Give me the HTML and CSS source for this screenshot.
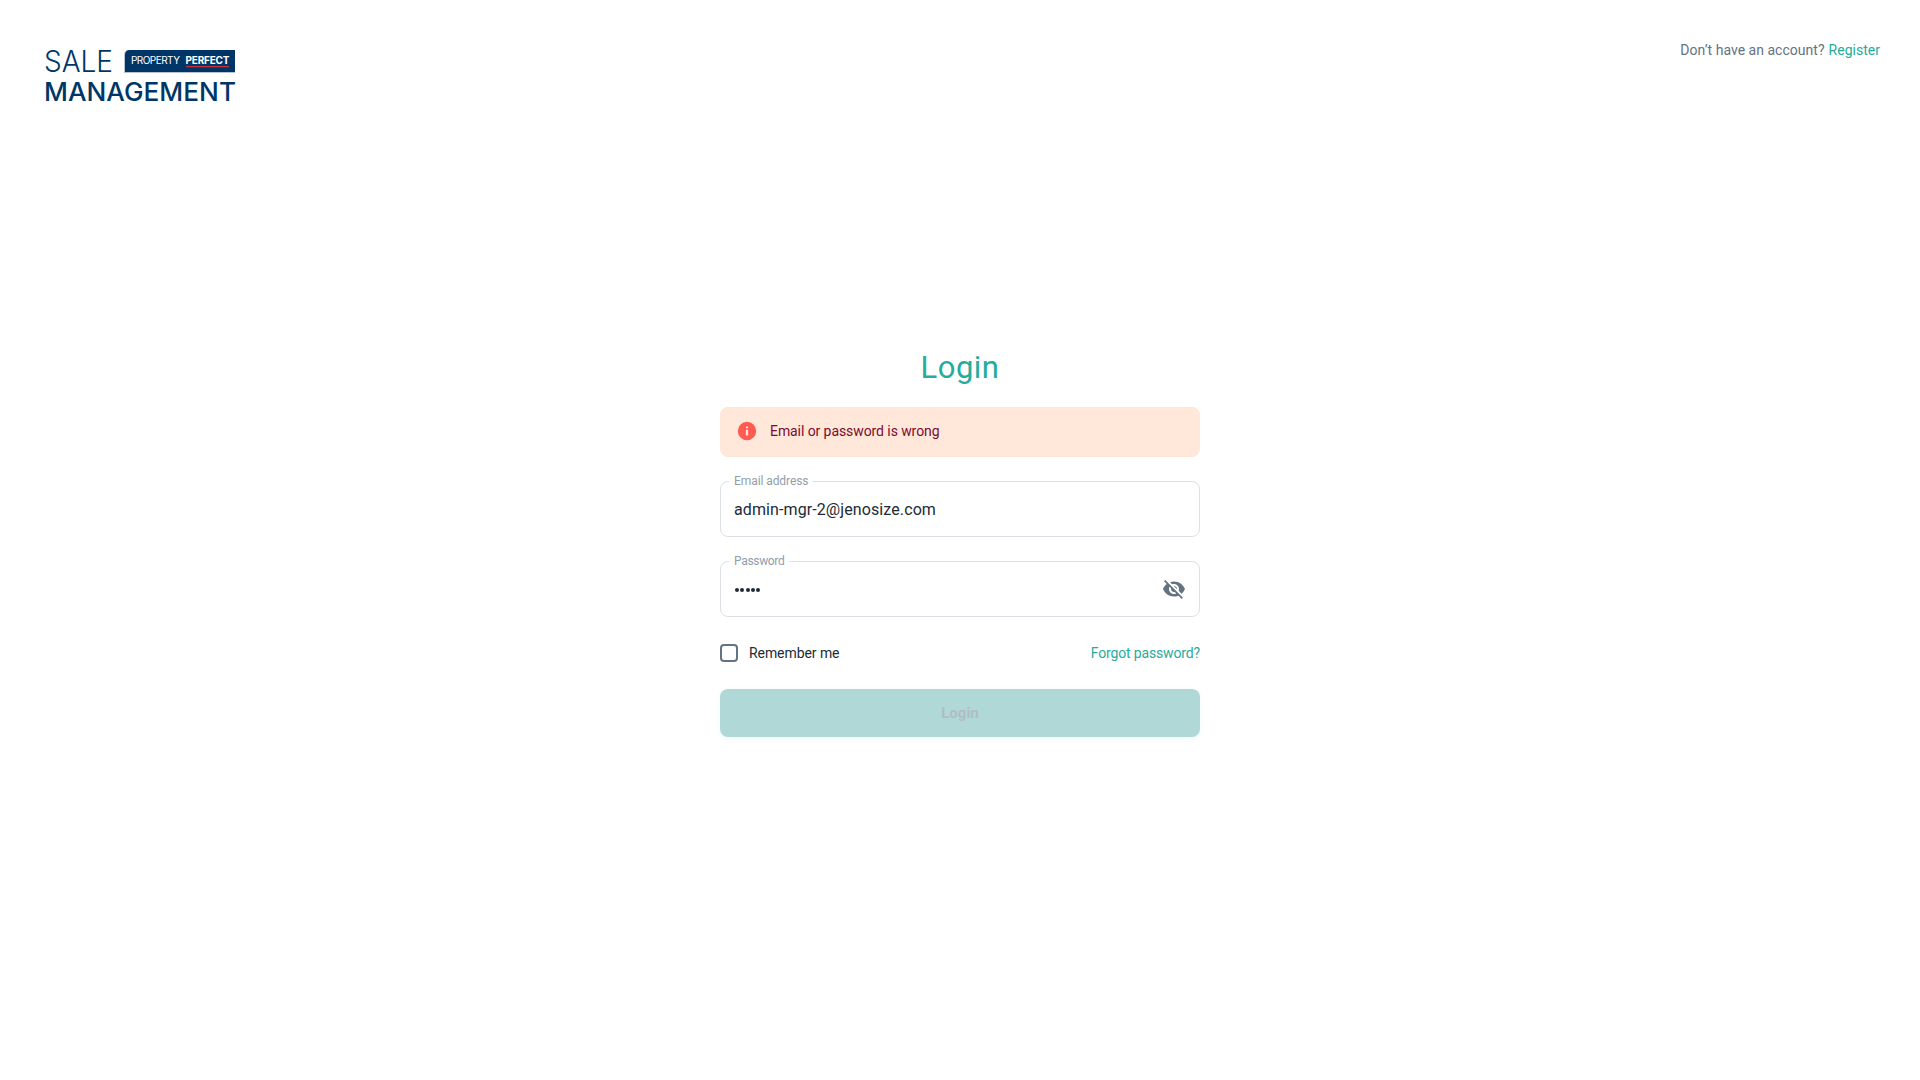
FILE: index.html
```html
<!DOCTYPE html>
<html lang="en">
<head>
<meta charset="utf-8">
<title>Login</title>
<link rel="stylesheet" href="styles.css">
</head>
<body>
<header class="header">
  <svg class="logo" width="192" height="56" viewBox="0 0 192 56" role="img" aria-label="Sale Management">
    <text class="logo-sale" x="-1" y="27.300" textLength="69" lengthAdjust="spacingAndGlyphs">SALE</text>
    <path d="M79 28V10q0-5 5-5h106v23z" fill="#b9c3cd"/>
    <path d="M80 27V10q0-5 5-5h105v22z" fill="#003667"/>
    <text class="logo-tag" x="86" y="19.300" textLength="49">PROPERTY</text>
    <text class="logo-tag logo-strong" x="140.500" y="19.300" textLength="44">PERFECT</text>
    <path d="M141 21.700h43" stroke="#c6303c" stroke-width="1.200"/>
    <text class="logo-management" x="-1" y="56" textLength="192" lengthAdjust="spacingAndGlyphs">MANAGEMENT</text>
  </svg>
  <p class="signup"><span>Don’t have an account?</span><a class="link">Register</a></p>
</header>
<main class="login">
  <h1 class="title">Login</h1>
  <div class="alert">
    <svg width="22" height="22" viewBox="0 0 24 24"><path fill="#ff5b52" d="M12 2a10 10 0 1 0 0 20 10 10 0 0 0 0-20zm1.200 15h-2.400v-6.500h2.400zm0-8h-2.400V7h2.400z"/></svg>
    <span class="alert-text">Email or password is wrong</span>
  </div>
  <div class="field">
    <label class="label">Email address</label>
    <span class="value">admin-mgr-2@jenosize.com</span>
  </div>
  <div class="field">
    <label class="label label-password">Password</label>
    <span class="dots"><i></i><i></i><i></i><i></i><i></i></span>
    <svg width="24" height="24" viewBox="0 0 24 24"><path fill="#637381" d="M12 7c2.760 0 5 2.240 5 5 0 .65-.13 1.260-.36 1.830l2.920 2.920c1.510-1.260 2.700-2.890 3.430-4.750-1.730-4.390-6-7.500-11-7.500-1.400 0-2.740.25-3.980.7l2.160 2.160C10.740 7.130 11.350 7 12 7zM2 4.270l2.280 2.280.46.46C3.080 8.300 1.780 10.020 1 12c1.730 4.390 6 7.500 11 7.500 1.550 0 3.030-.3 4.380-.84l.42.42L19.730 22 21 20.730 3.270 3 2 4.270zM7.530 9.800l1.550 1.550c-.05.21-.08.43-.08.65 0 1.660 1.340 3 3 3 .22 0 .44-.03.65-.08l1.550 1.550c-.67.33-1.410.53-2.200.53-2.760 0-5-2.240-5-5 0-.79.2-1.530.53-2.200zm4.310-.78 3.150 3.150.02-.16c0-1.660-1.340-3-3-3l-.17.010z"/></svg>
  </div>
  <div class="options">
    <label class="remember"><span class="checkbox"></span><span class="remember-text">Remember me</span></label>
    <a class="link forgot">Forgot password?</a>
  </div>
  <button class="submit" disabled>Login</button>
</main>
</body>
</html>
```
FILE: styles.css
```css
* { box-sizing: border-box; }
body { margin: 0; height: 1080px; display: flex; flex-direction: column; background: #fff; color: #212b36; font: 14px/22px Roboto, sans-serif; }
.header { display: flex; justify-content: space-between; align-items: flex-start; height: 350px; padding: 39px 40px 0 45px; }
.logo { margin-top: 6px; overflow: visible; }
.logo text { font-family: Inter, sans-serif; fill: #003667; }
.logo-sale { font-size: 29.5px; font-weight: 300; }
.logo-management { font-size: 25.5px; font-weight: 500; }
.logo .logo-tag { font-size: 10px; fill: #fff; }
.logo .logo-strong { font-weight: 700; }
.signup { display: flex; gap: 4px; margin: 0; color: #637381; letter-spacing: .02px; }
.link { color: #27ab9c; }
.login { width: 480px; margin: 0 auto; display: flex; flex-direction: column; }
.title { margin: 0 0 17px; height: 40px; text-align: center; color: #27ab9c; font-size: 31px; line-height: 36px; font-weight: 400; letter-spacing: .5px; }
.alert { display: flex; align-items: center; gap: 12px; height: 50px; padding: 0 16px 2px; border-radius: 8px; background: #ffe7d9; color: #7a0c2e; }
.alert-text { letter-spacing: -.08px; }
.field { position: relative; display: flex; align-items: center; justify-content: space-between; height: 56px; margin-top: 24px; padding: 0 13px; border: 1px solid #dce0e4; border-radius: 8px; font-size: 16px; }
.value { padding-top: 2px; letter-spacing: .1px; }
.label { position: absolute; left: 8px; top: -7px; padding: 0 5px; background: #fff; color: #919eab; font-size: 12px; line-height: 12px; letter-spacing: -.08px; }
.label-password { letter-spacing: -.32px; }
.dots { display: flex; gap: 1.3px; padding: 1px 0 0 1px; }
.dots i { width: 4px; height: 4px; border-radius: 50%; background: #212b36; }
.options { display: flex; justify-content: space-between; align-items: center; height: 24px; margin: 24px 0; }
.remember { display: flex; align-items: center; gap: 11px; }
.remember-text { letter-spacing: -.07px; }
.forgot { letter-spacing: -.15px; }
.checkbox { width: 18px; height: 18px; border: 2px solid #637381; border-radius: 4px; }
.submit { height: 48px; border: 0; border-radius: 8px; background: #b0d8d6; color: #b0bdc6; font: 700 15px/26px Roboto, sans-serif; box-shadow: 0 2px 6px rgba(39, 171, 156, .07); }
```
